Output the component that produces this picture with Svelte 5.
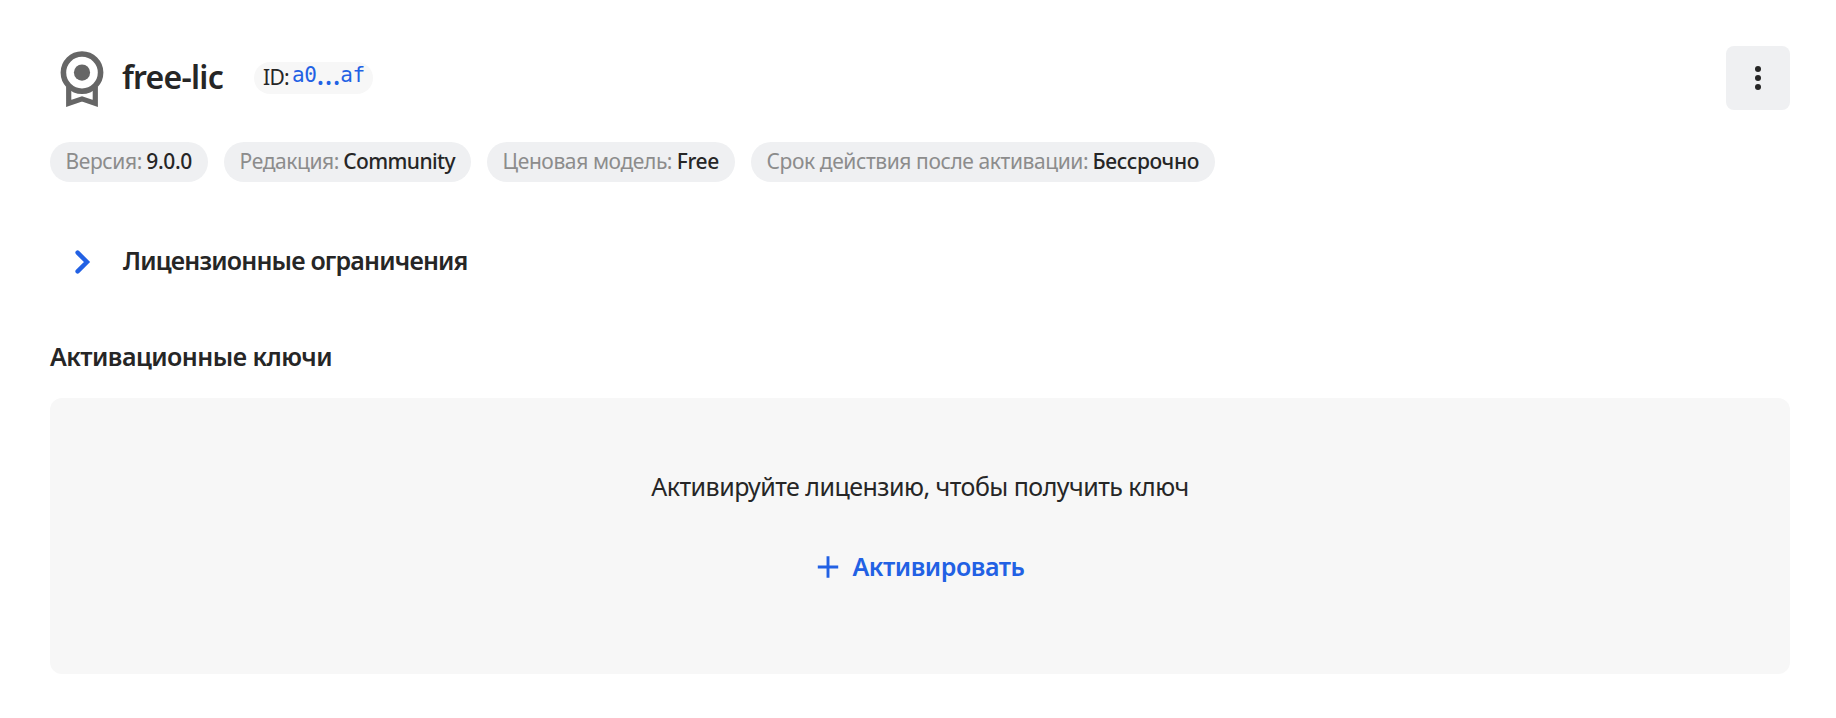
<script>
  let { name = 'free-lic', shortId = ['a0', '…', 'af'] } = $props()

  const details = [
    { label: 'Версия:', value: '9.0.0' },
    { label: 'Редакция:', value: 'Community' },
    { label: 'Ценовая модель:', value: 'Free' },
    { label: 'Срок действия после активации:', value: 'Бессрочно' }
  ]

  let isExpanded = $state(false)
</script>

<main class="license">
  <header class="header">
    <svg class="license-icon" viewBox="0 0 64 64" fill="none" stroke="currentColor">
      <circle cx="32" cy="26.6" r="18.6" stroke-width="5.6" />
      <circle cx="32" cy="26.6" r="8.1" fill="currentColor" stroke="none" />
      <path d="M18.7 41V57.4L32 52.9L45.3 57.4V41" stroke-width="5.2" />
    </svg>
    <h1>{name}</h1>
    <div class="id-pill">
      <span class="id-label">ID:</span>
      <a class="id-value" href="#id">{shortId[0]}<span class="dots">{shortId[1]}</span>{shortId[2]}</a>
    </div>
    <button class="menu-button" type="button" aria-label="Меню">
      <svg viewBox="0 0 64 64" fill="currentColor">
        <circle cx="32" cy="23" r="3" />
        <circle cx="32" cy="32" r="3" />
        <circle cx="32" cy="41" r="3" />
      </svg>
    </button>
  </header>

  <ul class="details">
    {#each details as { label, value }}
      <li>
        <span class="detail-label">{label}</span>
        <span class="detail-value">{value}</span>
      </li>
    {/each}
  </ul>

  <button
    class="limits"
    type="button"
    aria-expanded={isExpanded}
    onclick={() => (isExpanded = !isExpanded)}
  >
    <svg class:open={isExpanded} viewBox="0 0 64 64" fill="none" stroke="currentColor" stroke-width="4.4" stroke-linecap="round">
      <path d="M27.6 22.6L37 32L27.6 41.4" />
    </svg>
    <span>Лицензионные ограничения</span>
  </button>

  <h2>Активационные ключи</h2>

  <section class="empty">
    <p>Активируйте лицензию, чтобы получить ключ</p>
    <button class="activate" type="button">
      <svg viewBox="0 0 24 24" fill="none" stroke="currentColor" stroke-width="2.9">
        <path d="M12 2.3V23.7M1.8 13H22.2" />
      </svg>
      <span>Активировать</span>
    </button>
  </section>
</main>

<style>
  :global(body) {
    background: #fff;
  }

  .license {
    box-sizing: border-box;
    color: #262626;
    font-family: 'Noto Sans', 'Open Sans', sans-serif;
    height: 718px;
    padding: 46px 46px 0 50px;
  }

  button {
    background: none;
    border: 0;
    color: inherit;
    cursor: pointer;
    font: inherit;
    padding: 0;
  }

  .header {
    align-items: center;
    display: flex;
    height: 64px;
  }

  .license-icon {
    color: #666;
    flex: none;
    height: 64px;
    width: 64px;
  }

  h1 {
    font-size: 32px;
    font-weight: 560;
    height: 64px;
    letter-spacing: -.75px;
    line-height: 62px;
    margin: 0 0 0 8px;
    width: 132px;
  }

  .id-pill {
    align-items: flex-start;
    background: #f7f7f7;
    border-radius: 16px;
    box-sizing: border-box;
    display: flex;
    font-size: 21px;
    height: 32px;
    line-height: 30px;
    padding: 0 8px;
    white-space: nowrap;
    width: 119px;
  }

  .id-label {
    letter-spacing: -.7px;
    padding-left: 1px;
    width: 29px;
  }

  .id-value {
    color: #2261e4;
    font: 21px/27px 'DejaVu Sans Mono', monospace;
    letter-spacing: -.5px;
    text-decoration: none;
  }

  .dots {
    font-family: 'Noto Sans', sans-serif;
    font-size: 31px;
    line-height: 1px;
    vertical-align: -3px;
  }

  .menu-button {
    background: #eff0f2;
    border-radius: 8px;
    height: 64px;
    margin-left: auto;
    width: 64px;
  }

  .menu-button svg {
    display: block;
  }

  .details {
    display: grid;
    font-size: 21px;
    gap: 16px;
    grid-template-columns: 158px 247px 248px 464px;
    list-style: none;
    margin: 32px 0 0;
    padding: 0;
  }

  .details li {
    background: #eff0f2;
    border-radius: 20px;
    display: flex;
    height: 40px;
    justify-content: space-between;
    letter-spacing: -.41px;
    line-height: 39px;
    padding: 0 16px 0 15.6px;
    white-space: nowrap;
  }

  .detail-label {
    color: #8c8c8c;
  }

  .detail-value {
    font-weight: 460;
    letter-spacing: -.35px;
  }

  .details li:nth-child(2) .detail-value {
    letter-spacing: -.6px;
  }

  .limits {
    align-items: center;
    display: flex;
    font-size: 25px;
    font-weight: 580;
    gap: 9px;
    height: 64px;
    letter-spacing: -.82px;
    line-height: 61px;
    margin-top: 48px;
  }

  .limits span {
    height: 64px;
  }

  .limits svg {
    color: #2261e4;
    height: 64px;
    width: 64px;
  }

  .limits svg.open {
    transform: rotate(90deg);
  }

  h2 {
    font-size: 25px;
    font-weight: 580;
    letter-spacing: -.53px;
    line-height: 40px;
    margin: 42px 0 22px;
  }

  .empty {
    align-items: center;
    background: #f7f7f7;
    border-radius: 12px;
    box-sizing: border-box;
    display: flex;
    flex-direction: column;
    height: 276px;
    padding-top: 68px;
  }

  .empty p {
    font-size: 25px;
    letter-spacing: -.53px;
    line-height: 40px;
    margin: 0;
  }

  .activate {
    align-items: center;
    color: #2261e4;
    display: flex;
    font-size: 25px;
    font-weight: 580;
    gap: 13px;
    letter-spacing: -.45px;
    line-height: 40px;
    margin-top: 40px;
  }

  .activate svg {
    height: 24px;
    width: 24px;
  }
</style>
